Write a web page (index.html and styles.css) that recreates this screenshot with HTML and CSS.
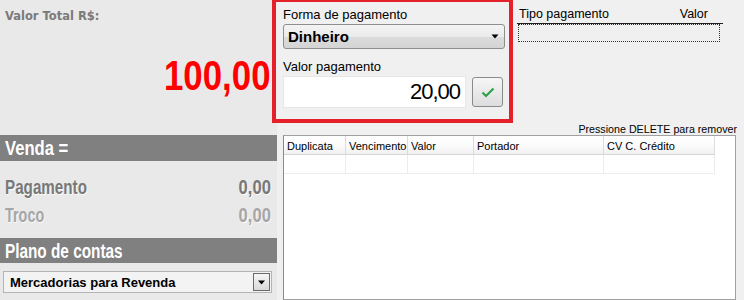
FILE: index.html
```html
<!DOCTYPE html>
<html lang="pt-BR">
<head>
<meta charset="utf-8">
<title>Pagamento</title>
<link rel="stylesheet" href="styles.css">
</head>
<body>
<div class="app">
  <div class="left">
    <div class="total">
      <div class="total-label">Valor Total R$:</div>
      <div class="total-value"><span class="cond-r">100,00</span></div>
    </div>
    <div class="bar bar-venda"><span class="cond-l">Venda =</span></div>
    <div class="sum-row sum-pag"><span class="cond-l">Pagamento</span><span class="cond-r num">0,00</span></div>
    <div class="sum-row sum-troco"><span class="cond-l">Troco</span><span class="cond-r num">0,00</span></div>
    <div class="bar bar-plano"><span class="cond-l">Plano de contas</span></div>
    <div class="combo">
      <span class="combo-text">Mercadorias para Revenda</span>
      <span class="combo-btn"><svg width="9" height="5" viewBox="0 0 9 5"><path d="M1 0.5h7L4.5 4.5z" fill="#000"/></svg></span>
    </div>
  </div>
  <div class="right">
    <div class="top">
      <div class="payform">
        <div class="field-label">Forma de pagamento</div>
        <div class="select">
          <span class="select-text">Dinheiro</span>
          <svg class="select-arrow" width="8" height="5" viewBox="0 0 8 5"><path d="M0.5 0.5h7L4 4.5z" fill="#000"/></svg>
        </div>
        <div class="field-label field-label2">Valor pagamento</div>
        <div class="value-row">
          <div class="value-input">20,00</div>
          <div class="ok-btn"><svg width="14" height="11" viewBox="0 0 14 11"><path d="M1.5 5.5l3.5 3.5 7.5-7.5" fill="none" stroke="#2fa24c" stroke-width="2.2"/></svg></div>
        </div>
      </div>
      <div class="tipo">
        <div class="tipo-head"><span>Tipo pagamento</span><span>Valor</span></div>
        <div class="tipo-list"></div>
      </div>
    </div>
    <div class="hint">Pressione DELETE para remover</div>
    <div class="panel">
      <div class="grid">
        <div class="th">Duplicata</div>
        <div class="th">Vencimento</div>
        <div class="th">Valor</div>
        <div class="th">Portador</div>
        <div class="th">CV C. Crédito</div>
        <div class="td"></div>
        <div class="td"></div>
        <div class="td"></div>
        <div class="td"></div>
        <div class="td"></div>
      </div>
    </div>
  </div>
</div>
</body>
</html>
```

FILE: styles.css
```css
html, body {
  margin: 0;
  padding: 0;
}
body {
  width: 744px;
  height: 300px;
  overflow: hidden;
  font-family: "Liberation Sans", Arial, sans-serif;
  background: #f0f0f0;
}
.app {
  display: flex;
  height: 300px;
}
.left {
  width: 277px;
  flex: none;
  background: #e9e9e9;
  display: flex;
  flex-direction: column;
}
.cond-l,
.cond-r {
  display: inline-block;
  white-space: nowrap;
}
.cond-l {
  transform: scaleX(0.77);
  transform-origin: left center;
}
.cond-r {
  transform: scaleX(0.83);
  transform-origin: right center;
}
.total {
  height: 135px;
  box-sizing: border-box;
  padding-top: 10px;
}
.total-label {
  font-family: "DejaVu Sans", Verdana, sans-serif;
  font-weight: bold;
  font-size: 11.5px;
  line-height: 13px;
  color: #7a7a7a;
  padding-left: 5px;
}
.total-value {
  margin-top: 30px;
  font-weight: bold;
  font-size: 43px;
  line-height: 44px;
  color: #ff0000;
  text-align: right;
  padding-right: 6px;
}
.total-value .cond-r {
  transform: scaleX(0.81);
}
.bar {
  background: #808080;
  color: #fff;
  font-weight: bold;
  font-size: 20px;
  padding-left: 5px;
}
.bar-venda {
  height: 26px;
  line-height: 26px;
}
.bar-venda .cond-l {
  transform: scaleX(0.83);
}
.bar-plano {
  margin-top: 9px;
  height: 25px;
  line-height: 25px;
  font-size: 21px;
}
.bar-plano .cond-l {
  transform: scaleX(0.73);
}
.sum-row {
  display: flex;
  justify-content: space-between;
  height: 28px;
  line-height: 28px;
  padding: 0 6px 0 5px;
  font-weight: bold;
  font-size: 20px;
  text-shadow: 1px 1px 0 rgba(255, 255, 255, 0.8);
}
.sum-pag {
  margin-top: 12px;
  color: #787878;
}
.sum-pag .cond-l {
  transform: scaleX(0.76);
}
.sum-troco {
  color: #a6a6a6;
}
.sum-troco .cond-l {
  transform: scaleX(0.72);
}
.combo {
  margin: 8px 0 0 3px;
  width: 269px;
  height: 22px;
  box-sizing: border-box;
  border: 1px solid #b4b4b4;
  background: #f3f3f3;
  display: flex;
  align-items: center;
  justify-content: space-between;
  padding: 0 1px 0 6px;
}
.combo-text {
  font-weight: bold;
  font-size: 13px;
  color: #000;
}
.combo-btn {
  width: 17px;
  height: 18px;
  box-sizing: border-box;
  border: 1px solid #6a6a6a;
  background: linear-gradient(#f6f6f6, #d9d9d9);
  display: flex;
  align-items: center;
  justify-content: center;
}
.right {
  flex: 1;
  display: flex;
  flex-direction: column;
}
.top {
  height: 123px;
  display: flex;
}
.payform {
  margin: -2px 0 0 -5px;
  width: 241px;
  height: 125px;
  flex: none;
  box-sizing: border-box;
  border: 4px solid #e4202a;
  background: #f0f0f0;
  padding: 5px 0 0 7px;
}
.field-label {
  font-size: 13px;
  line-height: 15px;
  color: #000;
}
.field-label2 {
  margin-top: 10px;
}
.select {
  margin-top: 2px;
  width: 222px;
  height: 25px;
  box-sizing: border-box;
  border: 1px solid #8e8e8e;
  border-radius: 3px;
  background: linear-gradient(#f4f4f4 0%, #ebebeb 50%, #dcdcdc 51%, #d4d4d4 100%);
  display: flex;
  align-items: center;
  justify-content: space-between;
  padding: 0 5px 0 4px;
}
.select-text {
  font-weight: bold;
  font-size: 15px;
  color: #000;
}
.value-row {
  margin-top: 2px;
  display: flex;
  align-items: center;
}
.value-input {
  width: 183px;
  height: 32px;
  box-sizing: border-box;
  border: 1px solid #e6e6e6;
  background: #fff;
  font-size: 22px;
  letter-spacing: -1px;
  line-height: 30px;
  text-align: right;
  padding-right: 5px;
  color: #000;
}
.ok-btn {
  margin-left: 6px;
  width: 31px;
  height: 30px;
  box-sizing: border-box;
  border: 1px solid #8a8a8a;
  border-radius: 3px;
  background: linear-gradient(#f6f6f6, #dddddd);
  display: flex;
  align-items: center;
  justify-content: center;
}
.tipo {
  padding-left: 4px;
  width: 206px;
}
.tipo-head {
  display: flex;
  justify-content: space-between;
  padding: 7px 15px 2px 2px;
  height: 14px;
  line-height: 14px;
  font-size: 12.5px;
  color: #000;
  border-bottom: 1px solid #1e1e1e;
}
.tipo-list {
  margin-left: 1px;
  width: 202px;
  height: 18px;
  box-sizing: border-box;
  border: 1px dotted #333;
}
.hint {
  height: 12px;
  line-height: 12px;
  font-size: 10.7px;
  text-align: right;
  padding-right: 7px;
  color: #000;
}
.panel {
  margin-left: 6px;
  width: 453px;
  height: 180px;
  box-sizing: border-box;
  border: 1px solid #a0a0a0;
  border-left-color: #8a8a8a;
  background: #fff;
}
.grid {
  display: grid;
  grid-template-columns: 62px 62px 66px 130px 111px;
  width: 431px;
}
.th {
  height: 19px;
  box-sizing: border-box;
  border-right: 1px solid #dcdcdc;
  border-bottom: 1px solid #d5d5d5;
  background: linear-gradient(#ffffff 0%, #fbfbfb 50%, #f1f1f1 100%);
  font-size: 11px;
  line-height: 18px;
  padding: 1px 0 0 3px;
  color: #000;
  white-space: nowrap;
  overflow: hidden;
}
.td {
  height: 19px;
  box-sizing: border-box;
  border-right: 1px solid #ececec;
  border-bottom: 1px solid #ececec;
  background: #fff;
}
```
